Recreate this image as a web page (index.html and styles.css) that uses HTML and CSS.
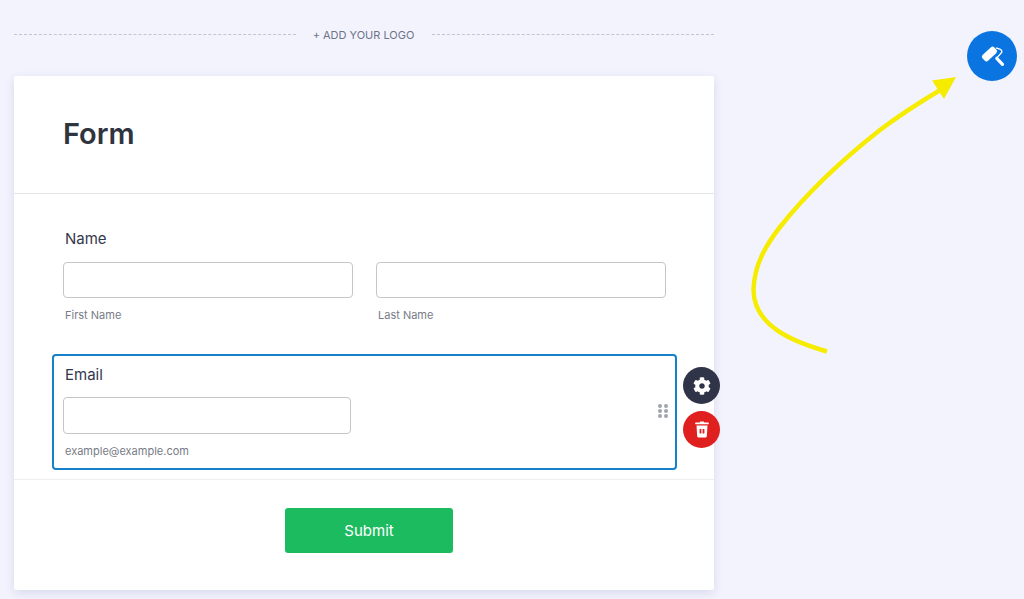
FILE: index.html
```html
<!doctype html>
<html lang="en">
<head>
  <meta charset="UTF-8">
  <title>Form</title>
  <link rel="stylesheet" href="styles.css">
</head>
<body>
<div class="page">
  <div class="logo-row">
    <span class="logo-line"></span>
    <span class="logo-text">+ ADD YOUR LOGO</span>
    <span class="logo-line"></span>
  </div>

  <div class="card">
    <div class="card-head">
      <h1 class="title">Form</h1>
    </div>

    <div class="card-body">
      <div class="field">
        <div class="label">Name</div>
        <div class="name-row">
          <div class="name-col">
            <div class="input"></div>
            <div class="sub">First Name</div>
          </div>
          <div class="name-col">
            <div class="input"></div>
            <div class="sub">Last Name</div>
          </div>
        </div>
      </div>

      <div class="field field-active">
        <div class="label">Email</div>
        <div class="input input-email"></div>
        <div class="sub">example@example.com</div>

        <div class="drag">
          <i></i><i></i><i></i><i></i><i></i><i></i>
        </div>
        <div class="tools">
          <div class="tool tool-gear">
            <svg width="18" height="18" viewBox="0 0 512 512"><path fill="#fff" d="M487.4 315.7l-42.6-24.6c4.3-23.2 4.3-47 0-70.2l42.6-24.6c4.9-2.8 7.1-8.6 5.5-14-11.1-35.6-30-67.8-54.7-94.6-3.8-4.1-10-5.1-14.8-2.3L380.8 110c-17.9-15.4-38.5-27.3-60.8-35.1V25.8c0-5.6-3.9-10.5-9.4-11.7-36.7-8.2-74.3-7.8-109.2 0-5.5 1.2-9.4 6.1-9.4 11.7V75c-22.2 7.9-42.8 19.8-60.8 35.1L88.7 85.5c-4.9-2.8-11-1.9-14.8 2.3-24.7 26.7-43.6 58.9-54.7 94.6-1.7 5.4.6 11.2 5.5 14L67.3 221c-4.3 23.2-4.3 47 0 70.2l-42.6 24.6c-4.9 2.8-7.1 8.6-5.5 14 11.1 35.6 30 67.8 54.7 94.6 3.8 4.1 10 5.1 14.8 2.3l42.6-24.6c17.9 15.4 38.5 27.3 60.8 35.1v49.2c0 5.6 3.9 10.5 9.4 11.7 36.7 8.2 74.3 7.8 109.2 0 5.5-1.2 9.4-6.1 9.4-11.7v-49.2c22.2-7.9 42.8-19.8 60.8-35.1l42.6 24.6c4.9 2.8 11 1.9 14.8-2.3 24.7-26.7 43.6-58.9 54.7-94.6 1.5-5.5-.7-11.3-5.6-14.1zM256 336c-44.1 0-80-35.9-80-80s35.9-80 80-80 80 35.9 80 80-35.9 80-80 80z"/></svg>
          </div>
          <div class="tool tool-trash">
            <svg width="14" height="17" viewBox="0 0 14 17"><path fill="#fff" d="M1 1.500h3.700L5.200.500h3.600l.5 1h3.700a.9.900 0 0 1 0 1.800H1a.9.900 0 0 1 0-1.800z"/><path fill="#fff" fill-rule="evenodd" d="M1.500 4.500h11l-.7 10.700c-.1 .8-.7 1.300-1.500 1.300H3.700c-.8 0-1.400-.5-1.500-1.300L1.500 4.500zM4.600 8v4.500h1.800V8H4.600zm3 0v4.500h1.800V8H7.600z"/></svg>
          </div>
        </div>
      </div>
    </div>

    <div class="card-foot">
      <button class="submit">Submit</button>
    </div>
  </div>
</div>

<div class="fab">
  <svg width="26" height="26" viewBox="0 0 26 26">
    <rect x="2.500" y="7" width="16" height="8" rx="2.600" fill="#fff" transform="rotate(-43 10.500 11)"/>
    <path d="M17 4.800l4.400 1.500c1.600.7 1.800 2.600.7 3.800l-4.400 5" fill="none" stroke="#fff" stroke-width="1.400"/>
    <path d="M17.800 15.300l5.700 6" fill="none" stroke="#fff" stroke-width="3.200" stroke-linecap="round"/>
  </svg>
</div>

<svg class="arrow" width="1024" height="599" viewBox="0 0 1024 599">
  <path d="M827 351.500C790 341 754 325 753.500 290C754 265 766 245 780 227C803 198 838 163 880 130C900 115 920 102 942 89" fill="none" stroke="#f6ec00" stroke-width="4.500"/>
  <path d="M956 77L932 80.500L944 99Z" fill="#f6ec00"/>
</svg>
</body>
</html>
```

FILE: styles.css
```css
* {
  box-sizing: border-box;
}
body {
  margin: 0;
  height: 599px;
  overflow: hidden;
  background: #f3f3fe;
  font-family: Inter, "Liberation Sans", sans-serif;
  color: #2c3345;
}
.page {
  width: 700px;
  margin-left: 14px;
}

/* logo */
.logo-row {
  display: flex;
  align-items: center;
  height: 70px;
  margin-bottom: 6px;
}
.logo-line {
  flex: 1;
  margin-top: -1px;
  border-top: 1px dashed #c3c3d6;
}
.logo-text {
  margin: 0 18px 0 17px;
  font-size: 11px;
  color: #6f7388;
  white-space: nowrap;
}

/* card */
.card {
  height: 514px;
  background: #fff;
  border-radius: 2px;
  box-shadow: 0 3px 10px rgba(60, 65, 110, .14);
}
.card-head {
  height: 118px;
  padding: 37px 0 0 49px;
  border-bottom: 1px solid #e3e5e8;
}
.title {
  margin: 0;
  font-size: 29px;
  line-height: 42px;
  font-weight: 600;
  color: #30343f;
}
.card-body {
  padding: 24px 37px 0 38px;
}
.field {
  position: relative;
  padding: 11px 11px;
  margin-bottom: 20px;
}
.field-active {
  padding: 9px 9px 9px 9px;
  margin-bottom: 0;
  border: 2px solid #1681c8;
  border-radius: 4px;
}
.label {
  padding-left: 2px;
  font-size: 15px;
  line-height: 20px;
  font-weight: 400;
  color: #33384a;
}
.name-row {
  display: flex;
  gap: 23px;
  margin-top: 13px;
}
.name-col {
  width: 290px;
}
.input {
  height: 36px;
  background: #fff;
  border: 1px solid #c4c5c9;
  border-radius: 4px;
}
.input-email {
  width: 288px;
  height: 37px;
  margin-top: 12px;
}
.sub {
  margin-top: 9px;
  padding-left: 2px;
  font-size: 11px;
  line-height: 16px;
  color: #777b86;
}

/* drag handle and field tools */
.drag {
  position: absolute;
  left: 604px;
  top: 48px;
  width: 10px;
  display: grid;
  grid-template-columns: 4px 4px;
  gap: 1px 2px;
}
.drag i {
  width: 4px;
  height: 4px;
  border-radius: 50%;
  background: #a0a4ad;
}
.tools {
  position: absolute;
  left: 629px;
  top: 11px;
  display: flex;
  flex-direction: column;
  gap: 7px;
}
.tool {
  display: flex;
  align-items: center;
  justify-content: center;
  width: 37px;
  height: 37px;
  border-radius: 50%;
}
.tool-gear {
  background: #2f3448;
}
.tool-trash {
  background: #e0201f;
}

/* footer */
.card-foot {
  margin-top: 9px;
  padding: 28px 0 0 271px;
  border-top: 1px solid #eceef0;
}
.submit {
  display: block;
  width: 168px;
  height: 45px;
  border: 0;
  border-radius: 3px;
  background: #1dbb5f;
  color: #fff;
  font-family: inherit;
  font-size: 15px;
}

/* helper overlay */
.fab {
  position: absolute;
  left: 967px;
  top: 31px;
  display: flex;
  align-items: center;
  justify-content: center;
  width: 50px;
  height: 50px;
  border-radius: 50%;
  background: #0a75e0;
}
.arrow {
  position: absolute;
  left: 0;
  top: 0;
  pointer-events: none;
}
```
